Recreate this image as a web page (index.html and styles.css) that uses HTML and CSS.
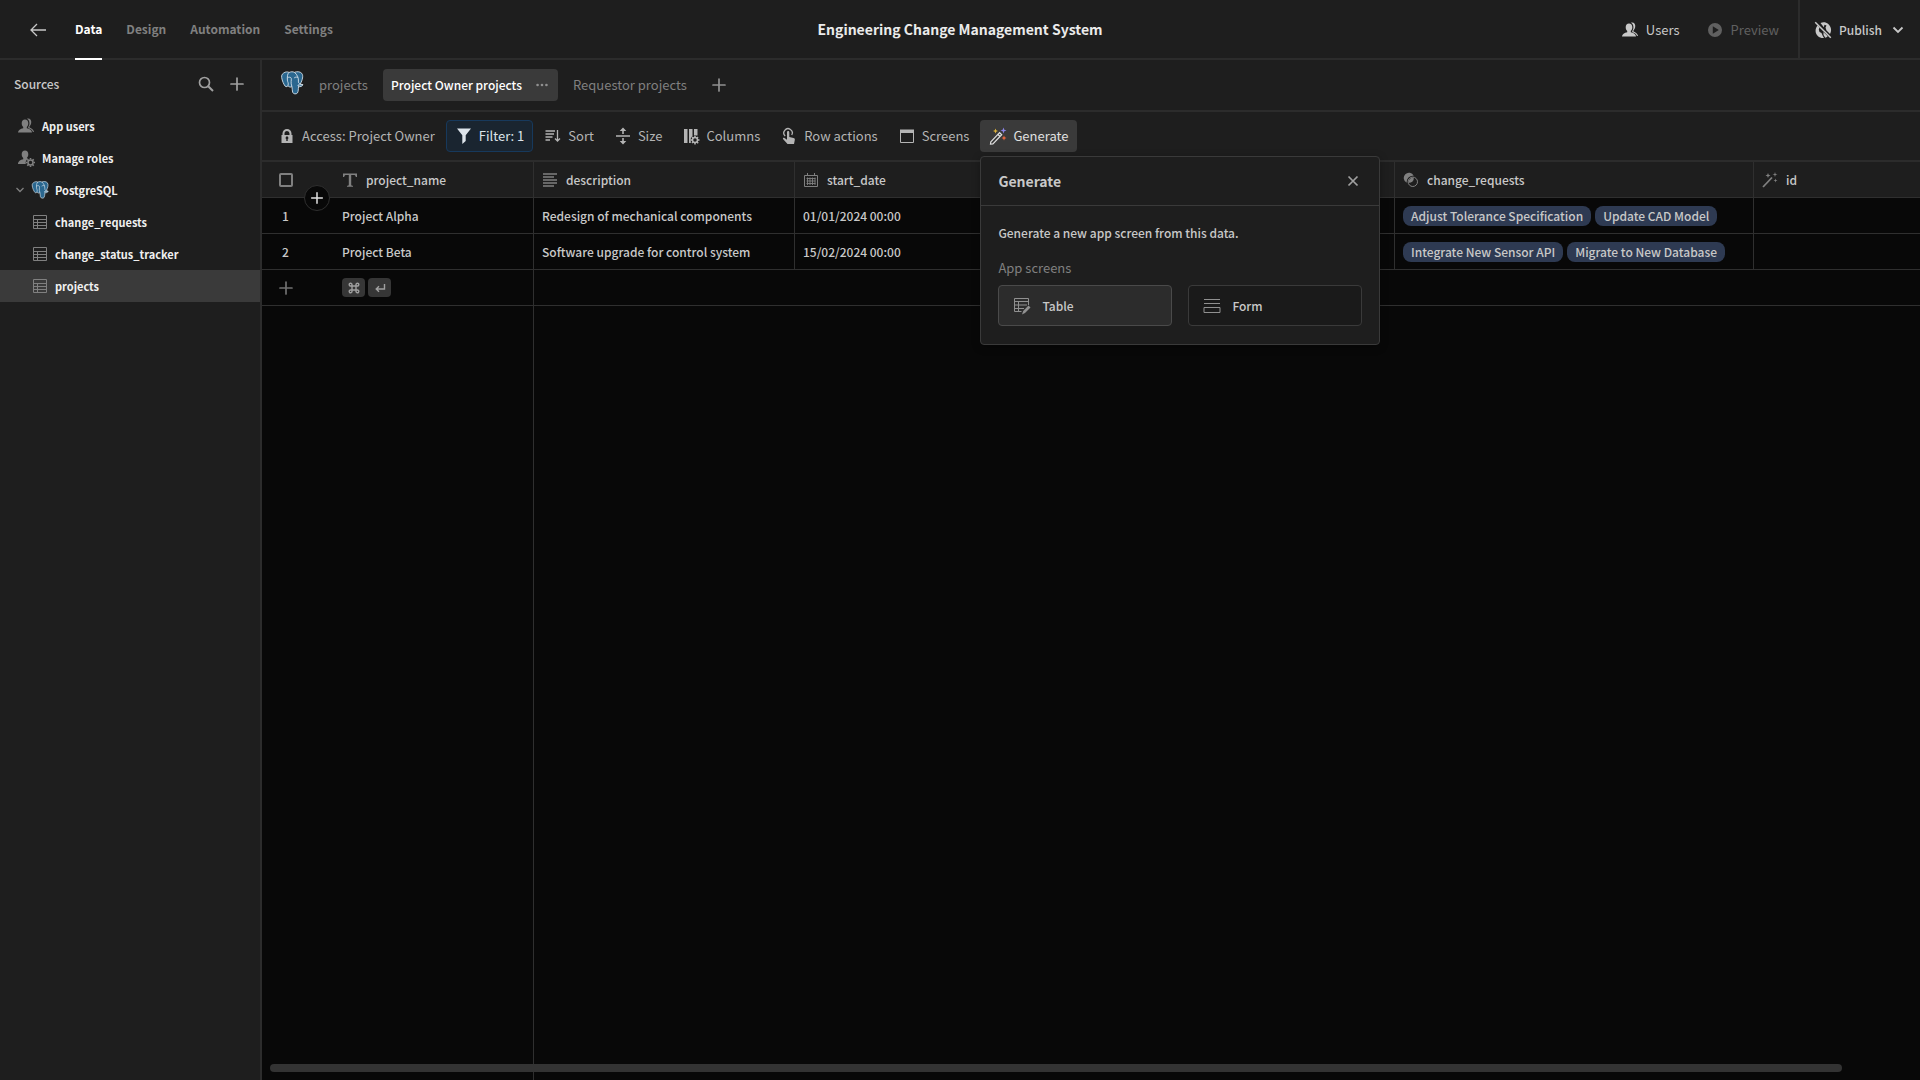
FILE: index.html
```html
<!DOCTYPE html>
<html lang="en">
<head>
    <meta charset="UTF-8">
    <meta name="viewport" content="width=device-width, initial-scale=1.0">
    <title>Engineering Change Management System</title>
    <link rel="stylesheet" href="styles.css">
</head>
<body>
    <!-- shared icons -->
    <svg class="sprite" aria-hidden="true">
        <symbol id="i-postgres" viewBox="0 0 24 25">
            <path d="M3.2 2.2C5 .6 7.600 .7 9 1.500C11 .6 13 .6 14.600 1.400C17 .3 20.500 .5 22.200 2.500C24 5 23 9 20.700 13.500C21.500 14 22.700 14 23.300 14.200C23 16 20.500 16.600 18.800 16.300C18.500 19 18.700 21 17.700 22.800C16.500 24.400 13.300 24.200 12.600 22C12.200 20 12.300 18 11.900 16.200C10.500 17.200 9 16.700 7.800 15.400C6.500 17 5 16.500 4 14.500C2.200 11.500 .9 7 1.200 5C1.400 3.700 2.200 2.900 3.200 2.200Z" fill="#2a678f" stroke="#dbe6ee" stroke-width="0.900"/>
            <path d="M9 1.500C7 3 7.100 6 7.200 9.500C7.200 11.500 8.800 12.300 7.800 15.400M14.600 1.400C17.500 3.800 19 7.500 18.700 10.500C18.500 12 19 13 20.700 13.500M7.300 7C8.600 6.200 10.800 6.300 11.200 7.500C11.700 9.700 10.200 12 11.900 16.200M14.300 7.200C15.500 6.200 17.300 6 18.300 6.800M18.800 16.300L18.200 14.600L23.300 14.200" fill="none" stroke="#dbe6ee" stroke-width="0.900"/>
        </symbol>
        <symbol id="i-users" viewBox="0 0 18 18">
            <path d="M8 2.500C5.900 2.500 4.700 4 4.700 6.200C4.700 8 5.400 9.200 6.200 10V11.300C3.500 11.900 1 13.300 1 15.500H15C15 13.300 12.500 11.900 9.800 11.300V10C10.600 9.200 11.300 8 11.300 6.200C11.300 4 10.100 2.500 8 2.500Z"/>
            <path d="M10 1.700C12.800 1 14.700 3 14.200 6C14 7.500 13.200 8.600 12.500 9.300V10.500C14.600 11.200 16.800 12.800 17 15H16C15.500 13 13.300 11.700 11.200 11V9.900C12.800 8.300 13.300 3.500 10 1.700Z"/>
        </symbol>
        <symbol id="i-roles" viewBox="0 0 18 18">
            <path d="M8 1.500C5.900 1.500 4.700 3 4.700 5.200C4.700 7 5.400 8.200 6.200 9V10.300C3.500 10.900 1 12.300 1 15H8.800C8.300 12.800 9.400 10.700 10.900 9.800L9.800 9C10.600 8.200 11.300 7 11.300 5.200C11.300 3 10.100 1.500 8 1.500Z"/>
            <circle cx="13.500" cy="13.500" r="2.500" fill="none" stroke="currentColor" stroke-width="1.500"/>
            <path d="M13.500 9V10.500M13.500 16.500V18M9 13.500H10.500M16.500 13.500H18M10.300 10.300L11.400 11.400M15.600 15.600L16.700 16.700M10.300 16.700L11.400 15.600M15.600 11.400L16.700 10.300" stroke="currentColor" stroke-width="1.600"/>
        </symbol>
        <symbol id="i-table" viewBox="0 0 18 18">
            <path d="M2.500 2.500H15.500V15.500H2.500ZM2.500 6.500H15.500M6.500 6.500V15.500M2.500 9.500H15.500M2.500 12.500H15.500" fill="none" stroke="currentColor"/>
        </symbol>
        <symbol id="i-plus" viewBox="0 0 18 18">
            <path d="M9 3V15M3 9H15" stroke="currentColor" stroke-width="1.700" stroke-linecap="round"/>
        </symbol>
    </svg>

    <header class="topbar">
        <a class="back" href="#" aria-label="Back">
            <svg viewBox="0 0 18 18"><path d="M17 9H2M8 3L2 9L8 15" fill="none" stroke="currentColor" stroke-width="1.300"/></svg>
        </a>
        <nav class="main-nav">
            <a class="active" href="#">Data</a>
            <a href="#">Design</a>
            <a href="#">Automation</a>
            <a href="#">Settings</a>
        </nav>
        <h1>Engineering Change Management System</h1>
        <div class="top-actions">
            <button class="top-btn"><svg><use href="#i-users"/></svg>Users</button>
            <button class="top-btn preview" disabled>
                <svg viewBox="0 0 18 18"><path fill-rule="evenodd" d="M9 2A7 7 0 1 0 9 16A7 7 0 1 0 9 2ZM6.800 5.300L12.800 9L6.800 12.700Z"/></svg>Preview
            </button>
            <button class="top-btn publish">
                <svg viewBox="0 0 18 18">
                    <path d="M3.500 4.500C1 7.500 .8 12 3.800 15C5.500 16.700 8 17.300 10 17L8.700 14.800L7.500 12L5.500 11L4.800 8.500L5.500 6.500ZM6.500 2C9 .8 12 1 14.300 3C17.500 6 17.800 10 16 13L13.800 10.700L12.500 9.500L11.500 6.500L12.500 4.500L10.500 3.700L9.800 6.200ZM9.500 11L13.700 15.200C13 16 12 16.500 11.300 16.700L9.500 14Z"/>
                    <path d="M1.200 1.200L16.800 16.800" stroke="currentColor" stroke-width="1.500"/>
                </svg>Publish
                <svg class="chevron" viewBox="0 0 12 12"><path d="M1.500 3.500L6 8L10.500 3.500" fill="none" stroke="currentColor" stroke-width="1.800"/></svg>
            </button>
        </div>
    </header>

    <div class="workspace">
        <aside class="sidebar">
            <div class="sidebar-head">
                <h2>Sources</h2>
                <button class="icon-btn" aria-label="Search">
                    <svg viewBox="0 0 18 18"><circle cx="7.500" cy="7.500" r="5" fill="none" stroke="currentColor" stroke-width="1.700"/><path d="M11.200 11.200L16 16" stroke="currentColor" stroke-width="2"/></svg>
                </button>
                <button class="icon-btn" aria-label="Add source"><svg><use href="#i-plus"/></svg></button>
            </div>
            <nav class="sources">
                <a href="#"><svg><use href="#i-users"/></svg>App users</a>
                <a href="#"><svg><use href="#i-roles"/></svg>Manage roles</a>
                <a class="datasource" href="#">
                    <svg class="caret" viewBox="0 0 12 12"><path d="M2.500 4L6 7.500L9.500 4" fill="none" stroke="currentColor" stroke-width="1.300"/></svg>
                    <svg><use href="#i-postgres"/></svg>PostgreSQL
                </a>
                <a class="table-link" href="#"><svg><use href="#i-table"/></svg>change_requests</a>
                <a class="table-link" href="#"><svg><use href="#i-table"/></svg>change_status_tracker</a>
                <a class="table-link selected" href="#"><svg><use href="#i-table"/></svg>projects</a>
            </nav>
        </aside>

        <main class="content">
            <div class="view-tabs">
                <svg class="db-logo"><use href="#i-postgres"/></svg>
                <button class="tab">projects</button>
                <button class="tab active">Project Owner projects
                    <svg viewBox="0 0 18 18"><circle cx="4" cy="9" r="1.500"/><circle cx="9" cy="9" r="1.500"/><circle cx="14" cy="9" r="1.500"/></svg>
                </button>
                <button class="tab">Requestor projects</button>
                <button class="tab add" aria-label="Add view"><svg><use href="#i-plus"/></svg></button>
            </div>

            <div class="toolbar">
                <button class="tool">
                    <svg viewBox="0 0 18 18"><path fill-rule="evenodd" d="M4.500 8V6.500A4.500 4.500 0 0 1 13.500 6.500V8H14.500V16H3.500V8ZM6.500 8H11.500V6.500A2.500 2.500 0 0 0 6.500 6.500ZM8.300 12V14H9.700V12A1.400 1.400 0 1 0 8.300 12Z"/></svg>Access: Project Owner
                </button>
                <button class="tool filter">
                    <svg viewBox="0 0 18 18"><path d="M2 1.500H16L10.700 8.200V14L7.300 17V8.200Z"/></svg>Filter: 1
                </button>
                <button class="tool">
                    <svg viewBox="0 0 18 18"><path d="M1.500 4H11M1.500 7H10M1.500 10H8.500M1.500 13H6" stroke="currentColor" stroke-width="1.500"/><path d="M13.500 3V14M11 11.500L13.500 14L16 11.500" fill="none" stroke="currentColor" stroke-width="1.300"/></svg>Sort
                </button>
                <button class="tool">
                    <svg viewBox="0 0 18 18"><path d="M2 8.200H16V9.800H2ZM9 .5L12.300 4H9.800V7H8.200V4H5.700ZM9 17.500L12.300 14H9.800V11H8.200V14H5.700Z"/></svg>Size
                </button>
                <button class="tool">
                    <svg viewBox="0 0 18 18"><path d="M2 2H5.500V16H2ZM7 2H10.500V9L8.800 11V16H7ZM12 2H15.500V8.500H12Z"/><circle cx="13" cy="13" r="2.500" fill="none" stroke="currentColor" stroke-width="1.500"/><path d="M13 9V10M13 16V17.500M9 13H10M16 13H17.500M10 10L11 11M15 15L16.200 16.200M10 16L11 15M15 11L16 10" stroke="currentColor" stroke-width="1.500"/></svg>Columns
                </button>
                <button class="tool">
                    <svg viewBox="0 0 18 18"><path d="M7 5.500C7 3.600 9.300 3.600 9.300 5.500V10L13.500 11C14.700 11.300 15 12 14.800 13L14 17H7.500L3 12C2.600 11.200 3.600 10.500 4.500 11L7 12.800Z"/><path d="M5.200 9A4.200 4.200 0 1 1 11.700 8" fill="none" stroke="currentColor" stroke-width="1.300"/></svg>Row actions
                </button>
                <button class="tool">
                    <svg viewBox="0 0 18 18"><path d="M2.500 3.500H15.500V15.500H2.500Z" fill="none" stroke="currentColor"/><path d="M2 2.500H16V6H2Z"/></svg>Screens
                </button>
                <div class="generate">
                    <button class="tool open" aria-expanded="true">
                        <svg viewBox="0 0 18 18">
                            <path d="M1.800 14.800L10.600 5.700L12.700 7.700L3.900 16.800L1.500 17ZM9 7.500L11 9.500" fill="none" stroke="currentColor" stroke-width="1.200"/>
                            <path d="M6.500 1.500L7.200 3.300L9 4L7.200 4.700L6.500 6.500L5.800 4.700L4 4L5.800 3.300Z" fill="#e0b33b"/>
                            <path d="M14.500 .5L15.300 2.700L17.500 3.500L15.300 4.300L14.500 6.500L13.700 4.300L11.500 3.500L13.700 2.700Z" fill="#8b84e8"/>
                            <path d="M15 8.500L15.800 10.200L17.500 11L15.800 11.800L15 13.500L14.200 11.800L12.500 11L14.200 10.200Z" fill="#e8663e"/>
                        </svg>Generate
                    </button>
                    <section class="popover">
                        <div class="popover-head">
                            <h3>Generate</h3>
                            <button class="icon-btn" aria-label="Close"><svg viewBox="0 0 18 18"><path d="M4.500 4.500L13.500 13.500M13.500 4.500L4.500 13.500" stroke="currentColor" stroke-width="1.700"/></svg></button>
                        </div>
                        <div class="popover-body">
                            <p>Generate a new app screen from this data.</p>
                            <p class="label">App screens</p>
                            <div class="choices">
                                <button class="choice hovered">
                                    <svg viewBox="0 0 18 18"><path d="M15.500 8V1.500H1.500V14.500H8.500M1.500 4.500H15.500M5.500 4.500V14.500M1.500 8H14M1.500 11.500H11" fill="none" stroke="currentColor"/><path d="M15.500 8.500L17.500 10.500L12 16L9 17.500L10.200 14Z"/></svg>Table
                                </button>
                                <button class="choice">
                                    <svg viewBox="0 0 18 18"><path d="M1 2.500H17M1 6.500H17M1 10.500H17V15.500H1Z" fill="none" stroke="currentColor"/></svg>Form
                                </button>
                            </div>
                        </div>
                    </section>
                </div>
            </div>

            <div class="grid">
                <table>
                    <colgroup>
                        <col class="c-gutter"><col class="c-name"><col class="c-desc"><col class="c-date"><col class="c-date"><col class="c-date"><col class="c-rel"><col>
                    </colgroup>
                    <thead>
                        <tr>
                            <th class="gutter">
                                <input type="checkbox" aria-label="Select all rows">
                                <button class="insert" aria-label="Insert row"><svg><use href="#i-plus"/></svg></button>
                            </th>
                            <th><div class="th"><svg viewBox="0 0 16 16"><path d="M1 1.500H15V5H13.800C13.600 3.600 13 3 11.800 3H9.200V12.500C9.200 13.400 9.600 13.700 11 13.800V14.800H5V13.800C6.400 13.700 6.800 13.400 6.800 12.500V3H4.200C3 3 2.400 3.600 2.200 5H1Z"/></svg>project_name</div></th>
                            <th><div class="th"><svg viewBox="0 0 16 16"><path d="M1 2H15M1 5H12M1 8H15M1 11H15M1 14H12" stroke="currentColor" stroke-width="1.300"/></svg>description</div></th>
                            <th><div class="th"><svg viewBox="0 0 16 16"><path d="M1.500 3.500H14.500V14.500H1.500ZM4.500 1V4M11.500 1V4" fill="none" stroke="currentColor"/><path d="M3.500 6.500H12.500M3.500 9H12.500M3.500 11.500H12.500M4.500 5.500V13M7 5.500V13M9.500 5.500V13M12 5.500V13" stroke="currentColor" stroke-width="0.900"/></svg>start_date</div></th>
                            <th></th>
                            <th></th>
                            <th><div class="th"><svg viewBox="0 0 16 16"><circle cx="9.800" cy="9.800" r="4.700" fill="none" stroke="currentColor"/><path d="M10.700 3.800A5.200 5.200 0 1 0 3.800 10.700A6 6 0 0 1 10.700 3.800Z"/><path d="M10.800 5.500A4.800 4.800 0 0 1 5.500 10.800A4.800 4.800 0 0 1 10.800 5.500Z"/></svg>change_requests</div></th>
                            <th><div class="th"><svg viewBox="0 0 16 16"><path d="M1 15L10 5.500" stroke="currentColor" stroke-width="1.800"/><path d="M6 1L6.700 2.800L8.500 3.500L6.700 4.200L6 6L5.300 4.200L3.500 3.500L5.300 2.800ZM13 0L13.600 1.900L15.500 2.500L13.600 3.100L13 5L12.400 3.100L10.500 2.500L12.400 1.900ZM13.500 6.500L14 8L15.500 8.500L14 9L13.500 10.500L13 9L11.500 8.500L13 8Z"/></svg>id</div></th>
                        </tr>
                    </thead>
                    <tbody>
                        <tr>
                            <td class="gutter">1</td>
                            <td>Project Alpha</td>
                            <td>Redesign of mechanical components</td>
                            <td>01/01/2024 00:00</td>
                            <td></td>
                            <td></td>
                            <td><div class="tags"><span>Adjust Tolerance Specification</span><span>Update CAD Model</span></div></td>
                            <td></td>
                        </tr>
                        <tr>
                            <td class="gutter">2</td>
                            <td>Project Beta</td>
                            <td>Software upgrade for control system</td>
                            <td>15/02/2024 00:00</td>
                            <td></td>
                            <td></td>
                            <td><div class="tags"><span>Integrate New Sensor API</span><span>Migrate to New Database</span></div></td>
                            <td></td>
                        </tr>
                        <tr>
                            <td class="gutter"><button class="icon-btn add-row" aria-label="Add row"><svg><use href="#i-plus"/></svg></button></td>
                            <td>
                                <div class="keys">
                                    <kbd><svg viewBox="0 0 12 12"><path d="M4 4H8V8H4ZM4 4H2.700A1.400 1.400 0 1 1 4 2.700ZM8 4V2.700A1.400 1.400 0 1 1 9.300 4ZM8 8H9.300A1.400 1.400 0 1 1 8 9.300ZM4 8V9.300A1.400 1.400 0 1 1 2.700 8Z" fill="none" stroke="currentColor" stroke-width="1.400"/></svg></kbd>
                                    <kbd><svg viewBox="0 0 12 12"><path d="M10.500 2V7H2.500M5 4.200L2.200 7L5 9.800" fill="none" stroke="currentColor" stroke-width="1.400"/></svg></kbd>
                                </div>
                            </td>
                            <td colspan="6"></td>
                        </tr>
                    </tbody>
                </table>
                <div class="sticky-rest"></div>
                <div class="scrollbar"></div>
            </div>
        </main>
    </div>
</body>
</html>
```
FILE: styles.css
```css
* {
    box-sizing: border-box;
}
body {
    margin: 0;
    height: 100vh;
    display: flex;
    flex-direction: column;
    overflow: hidden;
    background: #1e1e1e;
    color: #c8c8c8;
    font-family: "Noto Sans CJK SC", "Noto Sans", sans-serif;
    font-size: 13px;
    line-height: 20px;
}
h1, h2, h3, p {
    margin: 0;
}
a {
    color: inherit;
    text-decoration: none;
}
button {
    margin: 0;
    padding: 0;
    border: 0;
    background: none;
    color: inherit;
    font: inherit;
    white-space: nowrap;
    cursor: pointer;
}
svg {
    width: 18px;
    height: 18px;
    flex-shrink: 0;
    fill: currentColor;
}
.sprite {
    display: none;
}
.icon-btn {
    display: flex;
    color: #a0a0a0;
}

/* top bar */
.topbar {
    display: grid;
    grid-template-columns: 1fr auto 1fr;
    height: 60px;
    border-bottom: 2px solid #2c2c2c;
    flex-shrink: 0;
}
.back {
    grid-area: 1 / 1;
    justify-self: start;
    align-self: center;
    display: flex;
    margin-left: 29px;
}
.main-nav {
    grid-area: 1 / 1;
    justify-self: start;
    display: flex;
    gap: 24px;
    margin-left: 75px;
    color: #808080;
    font-size: 12px;
    font-weight: 700;
}
.main-nav a {
    height: 60px;
    line-height: 58px;
}
.main-nav .active {
    color: #fff;
    border-bottom: 2px solid #fff;
}
.topbar h1 {
    color: #ebebeb;
    font-size: 14px;
    font-weight: 700;
    line-height: 58px;
}
.top-actions {
    display: flex;
    justify-content: flex-end;
}
.top-btn {
    display: flex;
    align-items: center;
    gap: 7px;
    margin-right: 26px;
}
.preview {
    margin-right: 19px;
    color: #606060;
}
.publish {
    margin: 0;
    padding: 0 16px 0 14px;
    border-left: 2px solid #2c2c2c;
    font-size: 12px;
    font-weight: 500;
}
.publish .chevron {
    width: 12px;
    height: 12px;
    margin-left: 3px;
}

/* sidebar */
.workspace {
    display: flex;
    flex: 1;
    min-height: 0;
}
.sidebar {
    width: 262px;
    border-right: 2px solid #2c2c2c;
    flex-shrink: 0;
}
.sidebar-head {
    display: flex;
    align-items: center;
    gap: 13px;
    height: 48px;
    padding: 0 14px;
}
.sidebar-head h2 {
    margin-right: auto;
    font-size: 12px;
    font-weight: 500;
}
.sources {
    padding-top: 2px;
    color: #f0f0f0;
    font-size: 11px;
    font-weight: 700;
}
.sources a {
    display: flex;
    align-items: center;
    gap: 7px;
    height: 32px;
    padding-left: 17px;
}
.sources svg {
    color: #808080;
}
.sources .datasource {
    gap: 6px;
    padding-left: 14px;
}
.sources .caret {
    width: 12px;
    height: 12px;
    margin-right: -1px;
}
.sources .table-link {
    padding-left: 31px;
    gap: 6px;
}
.sources .selected {
    background: #3a3a3a;
}

/* view tabs */
.content {
    flex: 1;
    min-width: 0;
    display: flex;
    flex-direction: column;
}
.view-tabs {
    display: flex;
    align-items: center;
    gap: 7px;
    height: 52px;
    padding-left: 18px;
    border-bottom: 2px solid #2c2c2c;
}
.db-logo {
    width: 24px;
    height: 24px;
    margin-bottom: 4px;
}
.tab {
    display: flex;
    align-items: center;
    gap: 12px;
    height: 32px;
    padding: 0 8px;
    border-radius: 4px;
    color: #808080;
}
.tab.active {
    background: #3a3a3a;
    color: #fff;
    font-size: 12px;
    font-weight: 500;
}
.tab svg {
    color: #909090;
}
.tab.active svg {
    width: 16px;
}

/* toolbar */
.toolbar {
    display: flex;
    align-items: center;
    gap: 2px;
    height: 50px;
    padding-left: 7px;
    border-bottom: 2px solid #2c2c2c;
}
.tool {
    display: flex;
    align-items: center;
    gap: 6px;
    height: 32px;
    padding: 0 8px;
    border: 1px solid transparent;
    border-radius: 4px;
    color: #b4b4b4;
}
.tool.filter {
    background: #1a2530;
    border-color: #17395c;
    color: #dde4ea;
}
.tool.open {
    background: #3a3a3a;
    color: #e0e0e0;
}
.generate {
    position: relative;
}
.popover {
    position: absolute;
    top: 36px;
    left: 0;
    z-index: 2;
    width: 400px;
    border: 1px solid #3a3a3a;
    border-radius: 4px;
    background: #1e1e1e;
    box-shadow: 0 2px 8px rgba(0, 0, 0, 0.3);
}
.popover-head {
    display: flex;
    align-items: center;
    justify-content: space-between;
    height: 49px;
    padding: 0 17px;
    border-bottom: 1px solid #3a3a3a;
}
.popover-head h3 {
    font-size: 14px;
    font-weight: 700;
}
.popover-body {
    padding: 17px 17px 18px;
    font-size: 12px;
    font-weight: 500;
}
.popover-body .label {
    margin: 15px 0 7px;
    color: #808080;
    font-size: 13px;
    font-weight: 400;
}
.choices {
    display: flex;
    gap: 16px;
}
.choice {
    display: flex;
    align-items: center;
    gap: 11px;
    flex: 1;
    height: 41px;
    padding: 0 14px;
    border: 1px solid #3a3a3a;
    border-radius: 4px;
    background: #1a1a1a;
    font-weight: 500;
}
.choice.hovered {
    background: #2c2c2c;
    border-color: #4a4a4a;
}
.choice svg {
    color: #909090;
}

/* data grid */
.grid {
    position: relative;
    display: flex;
    flex-direction: column;
    flex: 1;
    background: #080808;
}
table {
    width: 100%;
    table-layout: fixed;
    border-collapse: separate;
    border-spacing: 0;
    font-size: 12px;
}
.c-gutter {
    width: 72px;
}
.c-name, .c-date {
    width: 200px;
}
.c-desc {
    width: 261px;
}
.c-rel {
    width: 359px;
}
th, td {
    height: 36px;
    padding: 0 8px;
    border-right: 1px solid #2f2f2f;
    border-bottom: 1px solid #2f2f2f;
    font-weight: 500;
    text-align: left;
    white-space: nowrap;
}
th {
    background: #1e1e1e;
}
th:last-child, td:last-child {
    border-right: 0;
}
.gutter {
    position: relative;
    padding: 0 0 0 17px;
    border-right: 0;
}
td.gutter {
    padding-left: 20px;
}
.gutter input {
    display: block;
    appearance: none;
    width: 14px;
    height: 14px;
    margin: 0;
    border: 2px solid #808080;
    border-radius: 2px;
}
.insert {
    position: absolute;
    right: 4px;
    bottom: -14px;
    z-index: 1;
    display: grid;
    place-items: center;
    width: 26px;
    height: 26px;
    border: 1px solid #2f2f2f;
    border-radius: 50%;
    background: #080808;
    color: #e0e0e0;
}
.insert svg {
    width: 16px;
    height: 16px;
}
.th {
    display: flex;
    align-items: center;
    gap: 8px;
}
.th svg {
    width: 16px;
    height: 16px;
    color: #808080;
}
.tags {
    display: flex;
    gap: 4px;
}
.tags span {
    padding: 0 8px;
    border-radius: 8px;
    background: #2e3a52;
}
.add-row {
    margin-left: -5px;
    color: #707070;
}
.keys {
    display: flex;
    gap: 3px;
}
kbd {
    display: grid;
    place-items: center;
    width: 23px;
    height: 19px;
    border-radius: 4px;
    background: #363636;
    color: #a0a0a0;
}
kbd svg {
    width: 12px;
    height: 12px;
}
.sticky-rest {
    flex: 1;
    width: 272px;
    border-right: 1px solid #2f2f2f;
}
.scrollbar {
    position: absolute;
    left: 8px;
    right: 78px;
    bottom: 8px;
    height: 8px;
    border-radius: 4px;
    background: #333;
}
```
